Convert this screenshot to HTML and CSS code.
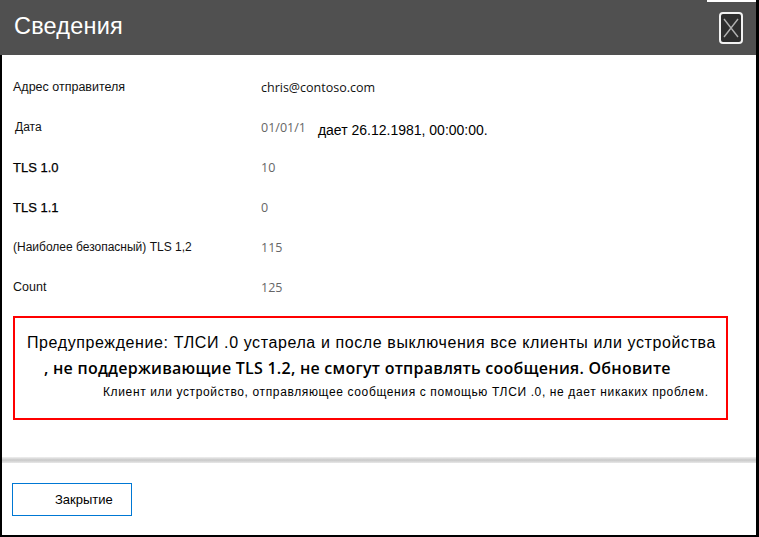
FILE: index.html
```html
<!DOCTYPE html>
<html lang="ru">
<head>
<meta charset="utf-8">
<title>Сведения</title>
<link rel="stylesheet" href="styles.css">
</head>
<body>
<div class="dialog">
  <header class="header">
    <h1 class="title">Сведения</h1>
    <button class="close-x" aria-label="Закрыть">
      <svg width="18" height="22" viewBox="0 0 18 22"><path d="M2 2 L16 20 M16 2 L2 20" stroke="#b0b0b0" stroke-width="1.4" fill="none"/></svg>
    </button>
    <span class="top-line"></span>
  </header>
  <main class="content">
    <div class="row"><span class="label">Адрес отправителя</span><span class="value dark">chris@contoso.com</span></div>
    <div class="row"><span class="label date-label">Дата</span><span class="value"><span class="gray">01/01/1</span><span class="date-rest">дает 26.12.1981, 00:00:00.</span></span></div>
    <div class="row"><span class="label tls">TLS 1.0</span><span class="value gray">10</span></div>
    <div class="row"><span class="label tls">TLS 1.1</span><span class="value gray">0</span></div>
    <div class="row"><span class="label small">(Наиболее безопасный) TLS 1,2</span><span class="value gray">115</span></div>
    <div class="row"><span class="label">Count</span><span class="value gray">125</span></div>
    <div class="warning">
      <p class="w1">Предупреждение: ТЛСИ .0 устарела и после выключения все клиенты или устройства</p>
      <p class="w2">, не поддерживающие TLS 1.2, не смогут отправлять сообщения. Обновите</p>
      <p class="w3">Клиент или устройство, отправляющее сообщения с помощью ТЛСИ .0, не дает никаких проблем.</p>
    </div>
  </main>
  <div class="separator"></div>
  <footer class="footer">
    <button class="close-btn">Закрытие</button>
  </footer>
</div>
</body>
</html>
```
FILE: styles.css
```css
* { box-sizing: border-box; }
html, body { margin: 0; padding: 0; background: #fff; }
.dialog {
  width: 759px;
  height: 537px;
  display: flex;
  flex-direction: column;
  border-left: 2px solid #000;
  border-right: 3px solid #000;
  border-bottom: 2px solid #000;
  font-family: "Liberation Sans", Arial, sans-serif;
  color: #000;
}
.header {
  position: relative;
  height: 55px;
  flex: none;
  background: #505050;
  display: flex;
  align-items: center;
  justify-content: space-between;
  padding: 0 13px 0 12px;
  margin-left: -2px;
}
.title {
  margin: 0 0 3px 2px;
  font-weight: normal;
  font-size: 23.5px;
  color: #fff;
  letter-spacing: 0.2px;
}
.close-x {
  width: 24px;
  height: 32px;
  margin-top: 1px;
  padding: 0;
  background: #2e2e2e;
  border: 2px solid #f2f2f2;
  border-radius: 4px;
  display: flex;
  align-items: center;
  justify-content: center;
}
.top-line {
  position: absolute;
  top: 0;
  right: 0;
  width: 49px;
  height: 2px;
  background: #fff;
}
.content {
  flex: 1;
  padding: 12px 28px 0 11px;
}
.row {
  height: 40px;
  display: flex;
  align-items: center;
}
.label {
  width: 248px;
  font-size: 12.5px;
  color: #111;
}
.date-label { padding-left: 2px; font-size: 12px; }
.tls { font-size: 13px; color: #000; -webkit-text-stroke: 0.25px #000; }
.small { font-size: 12px; }
.value {
  font-family: "Open Sans", sans-serif;
  font-size: 12.5px;
}
.dark { color: #111; }
.gray { color: #666; }
.date-rest {
  font-family: "Liberation Sans", Arial, sans-serif;
  font-size: 14px;
  color: #000;
  margin-left: 12px;
  position: relative;
  top: 3px;
}
.warning {
  margin-top: 9px;
  height: 104px;
  border: 2px solid #f00;
  padding: 14px 0 0 12px;
}
.warning p { margin: 0; white-space: nowrap; }
.w1 { font-size: 16px; line-height: 22px; letter-spacing: 0.6px; }
.w2 { font-family: "Open Sans", sans-serif; font-size: 16px; font-weight: 600; line-height: 28px; padding-left: 17px; letter-spacing: 0.25px; }
.w3 { font-size: 12px; line-height: 20px; padding-left: 76px; letter-spacing: 0.63px; }
.separator {
  height: 6px;
  flex: none;
  background: linear-gradient(#f0f0f0, #c8c8c8 50%, #e8e8e8);
}
.footer {
  height: 72px;
  flex: none;
  padding: 20px 0 0 10px;
}
.close-btn {
  width: 120px;
  height: 33px;
  background: #fff;
  border: 1.5px solid #0078d4;
  text-align: left;
  padding: 0 0 0 42px;
  font-family: "Liberation Sans", Arial, sans-serif;
  font-size: 13px;
  color: #000;
}
```
